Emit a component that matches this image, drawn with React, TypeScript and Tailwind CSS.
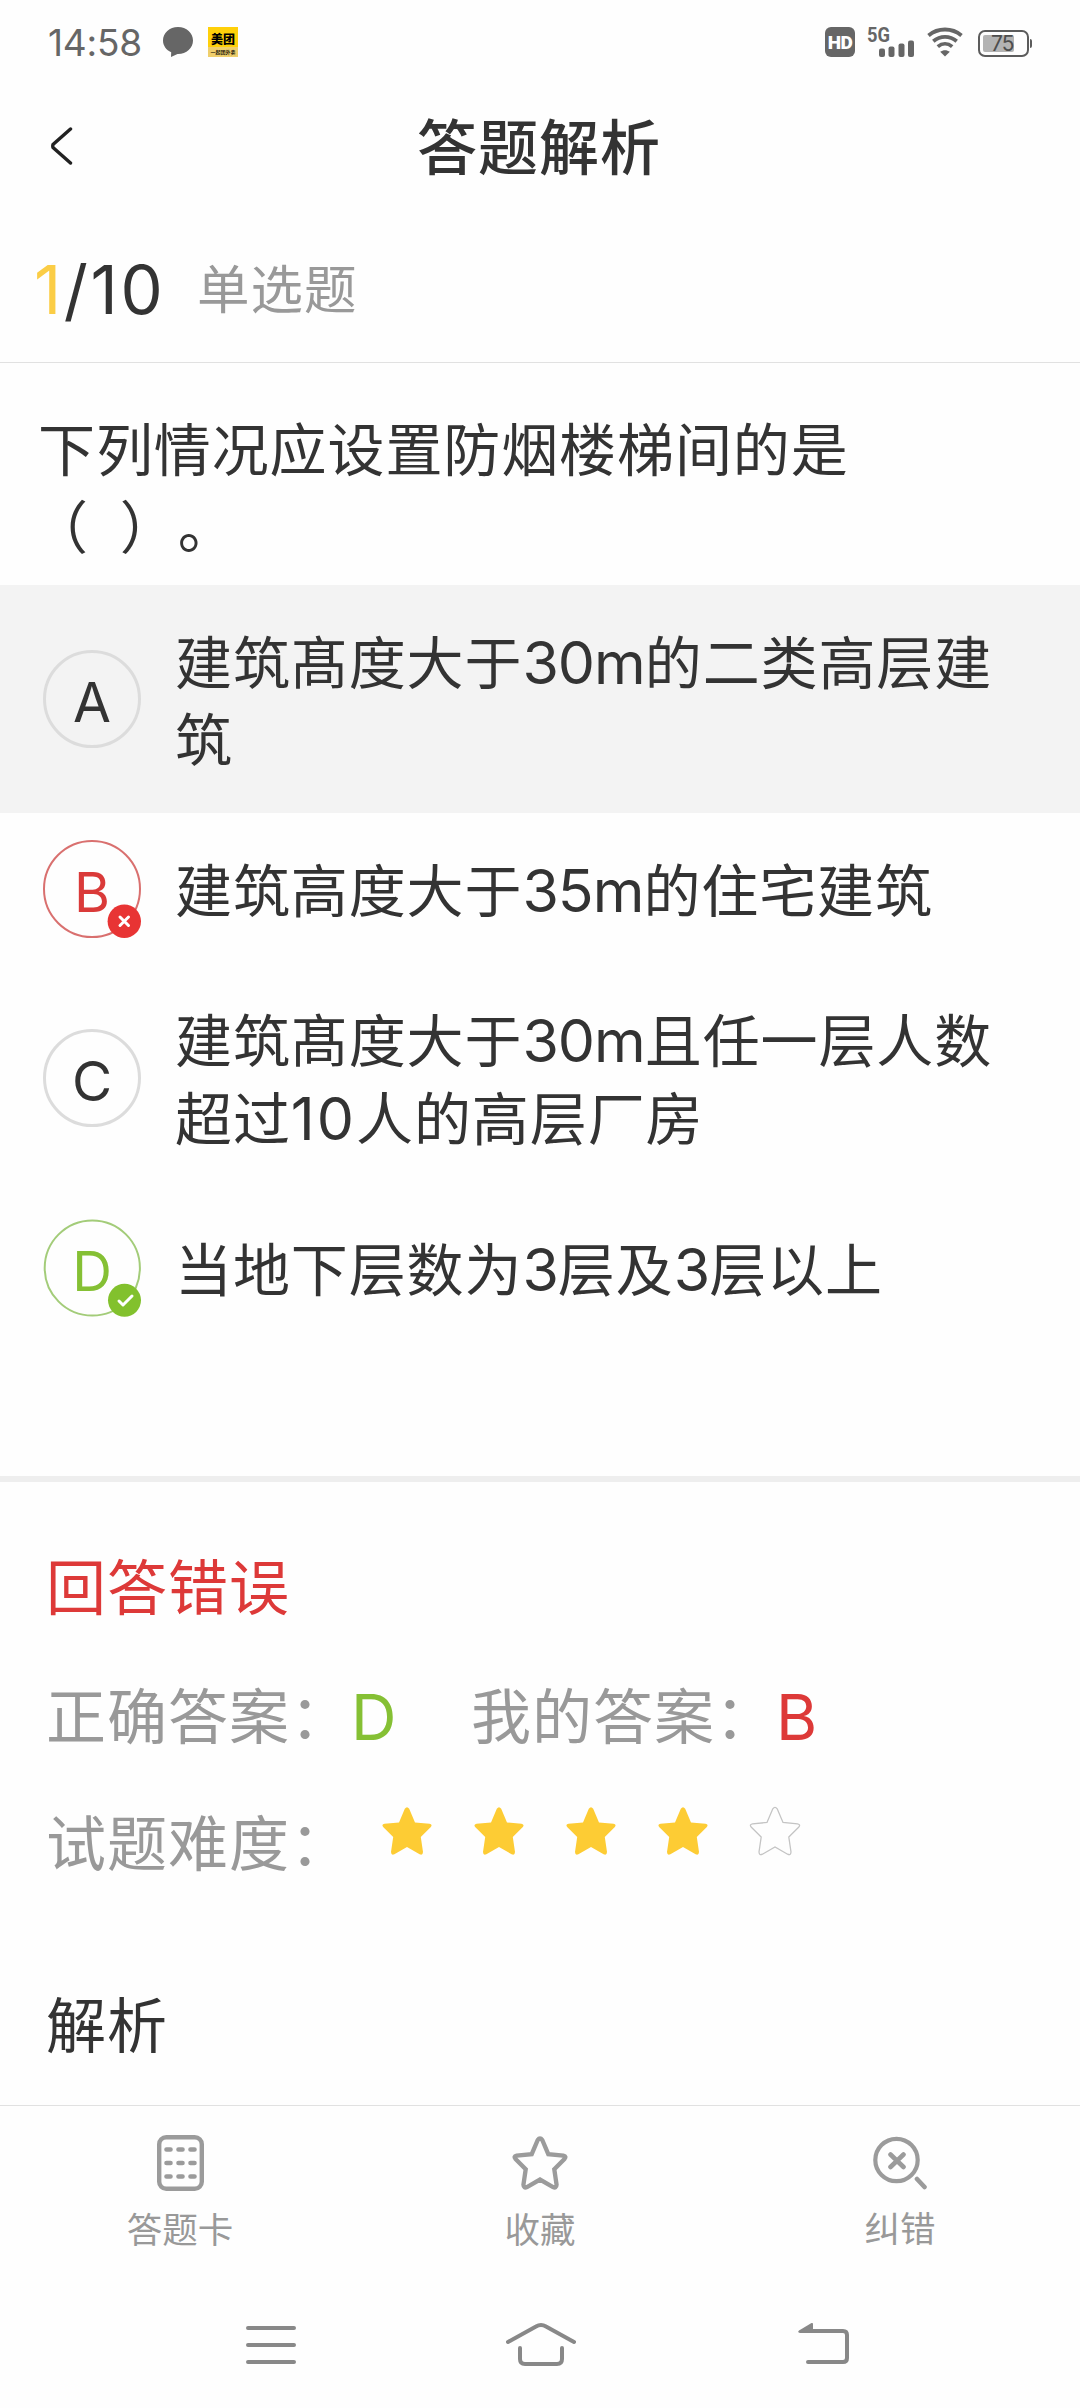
import React from "react";

const STAR_PATH =
  "M22.8 1.8Q25 -1.2 27.2 1.8L33 15.5L47.5 16.8Q51 17.6 48.6 20.2L38.8 30L41 45Q40.8 48.8 37.6 47.2L25 40L12.4 47.2Q9.2 48.8 9 45L11.2 30L1.4 20.2Q-1 17.6 2.5 16.8L17 15.5Z";

type Status = "normal" | "wrong" | "right";

const options: { key: string; text: string; status: Status; row: string }[] = [
  {
    key: "A",
    text: "建筑髙度大于30m的二类高层建筑",
    status: "normal",
    row: "h-[228px] bg-[#f3f3f3]",
  },
  {
    key: "B",
    text: "建筑高度大于35m的住宅建筑",
    status: "wrong",
    row: "h-[151px]",
  },
  {
    key: "C",
    text: "建筑髙度大于30m且任一层人数超过10人的高层厂房",
    status: "normal",
    row: "h-[228px]",
  },
  {
    key: "D",
    text: "当地下层数为3层及3层以上",
    status: "right",
    row: "h-[151px]",
  },
];

// digits and latin letters are set a little larger than the chinese text,
// numbers starting with the narrow "1" get some extra room
function MixedText({ text }: { text: string }) {
  return (
    <>
      {text.split(/([0-9A-Za-z]+)/).map((part, i) =>
        i % 2 ? (
          <span
            key={i}
            className={`text-[59px] ${
              part.startsWith("1") ? "tracking-[2px]" : "tracking-[-1px]"
            }`}
          >
            {part}
          </span>
        ) : (
          part
        )
      )}
    </>
  );
}

function StatusBar() {
  return (
    <div className="flex h-[84px] items-center pr-[48px] pl-[48px] text-[#666]">
      <span className="text-[37px] leading-none tracking-[-0.2px]">14:58</span>
      <svg className="ml-[21px]" width="30" height="30" viewBox="0 0 30 30">
        <path
          d="M15 0C6.500 0 0 6 0 13.500C0 18.600 3.200 23 8.200 25.300L8 30L14.500 27H15C23.500 27 30 21 30 13.500C30 6 23.500 0 15 0Z"
          fill="#666"
        />
      </svg>
      <div className="ml-[15px] flex h-[30px] w-[30px] flex-col items-center bg-[#ffd00a] text-black">
        <span className="mt-[6px] text-[12px] leading-[14px] font-black">
          美团
        </span>
        <div className="flex h-[10px] w-full items-center justify-center bg-[#efcf6c]">
          <span className="text-[5px] leading-none font-medium">
            一起团外卖
          </span>
        </div>
      </div>

      <div className="ml-auto flex h-[30px] w-[30px] items-center justify-center rounded-[6px] bg-[#666]">
        <span className="font-['Roboto',sans-serif] text-[19px] leading-none font-black tracking-[-0.5px] text-white">
          HD
        </span>
      </div>
      <svg
        className="ml-[12px] overflow-visible"
        width="48"
        height="30"
        viewBox="0 0 48 30"
      >
        <text
          x="0"
          y="14.500"
          fontSize="20"
          fontWeight="700"
          fontFamily="Roboto, sans-serif"
          textLength="23"
          lengthAdjust="spacingAndGlyphs"
          fill="#666"
        >
          5G
        </text>
        <rect x="12" y="21.500" width="6" height="8.500" rx="2" fill="#666" />
        <rect x="21.500" y="19.500" width="6" height="10.500" rx="2" fill="#666" />
        <rect x="31.500" y="16.500" width="6" height="13.500" rx="2" fill="#666" />
        <rect x="41" y="13.500" width="6" height="16.500" rx="2" fill="#666" />
      </svg>
      <svg
        className="ml-[12px]"
        width="36"
        height="30"
        viewBox="0 0 36 30"
        fill="none"
        stroke="#666"
        strokeWidth="3.800"
      >
        <path d="M1.500 8.500C11 0.500 25 0.500 34.500 8.500" />
        <path d="M6.300 14.200C13.200 8.400 22.800 8.400 29.700 14.200" />
        <path d="M10.800 19.600C15.200 16 20.800 16 25.200 19.600" />
        <path
          d="M13.200 24.800C16 22.600 20 22.600 22.800 24.800L18 29.500Z"
          fill="#666"
          stroke="none"
        />
      </svg>
      <div className="mt-[3px] ml-[15px] flex h-[27px] w-[51px] rounded-[7px] border-2 border-[#5c5c5c] p-[3px]">
        <div className="relative h-[17px] w-[31px] rounded-[2px] bg-[#b3b3b3]">
          <span className="absolute top-[-1px] left-[8px] text-[21px] leading-[20px] tracking-[-1px] text-[#4d4d4d]">
            75
          </span>
        </div>
      </div>
      <div className="mt-[3px] ml-[1px] h-[9px] w-[2px] rounded-r-sm bg-[#5c5c5c]"></div>
    </div>
  );
}

function OptionBadge({ label, status }: { label: string; status: Status }) {
  return (
    <div className="relative h-[98px] w-[98px] shrink-0">
      <svg width="98" height="98" viewBox="0 0 98 98" fill="none">
        {status === "normal" && (
          <circle cx="49" cy="49" r="47.500" stroke="#dcdcdc" strokeWidth="3" />
        )}
        {status === "wrong" && (
          <>
            <circle cx="49" cy="49" r="48" stroke="#d9706f" strokeWidth="2" />
            <circle cx="81.300" cy="81.300" r="16.700" fill="#e83434" />
            <path
              d="M77 77L85.500 85.500M85.500 77L77 85.500"
              stroke="#fff"
              strokeWidth="3"
              strokeLinecap="round"
            />
          </>
        )}
        {status === "right" && (
          <>
            <circle cx="49.300" cy="49" r="47.600" stroke="#a3cc79" strokeWidth="2" />
            <circle cx="81.500" cy="81.300" r="16.500" fill="#82c12d" />
            <path
              d="M76 82L80 86L89 77"
              stroke="#fff"
              strokeWidth="3"
              strokeLinecap="round"
              strokeLinejoin="round"
            />
          </>
        )}
      </svg>
      <span
        className={`absolute inset-x-0 top-[24px] text-center text-[55px] leading-[56px] ${
          status === "wrong"
            ? "text-[#da3a39]"
            : status === "right"
              ? "text-[#85c034]"
              : "text-[#333]"
        }`}
      >
        {label}
      </span>
    </div>
  );
}

function Stars({ value }: { value: number }) {
  return (
    <div className="flex gap-[40px]">
      {[1, 2, 3, 4, 5].map((n) => (
        <svg
          key={n}
          className="overflow-visible"
          width="52"
          height="48"
          viewBox="-1 0 52 48"
        >
          <path
            d={STAR_PATH}
            fill={n <= value ? "#fdcc34" : "none"}
            stroke={n <= value ? "none" : "#c4c4c4"}
            strokeWidth="1.300"
          />
        </svg>
      ))}
    </div>
  );
}

function TabBar() {
  return (
    <div className="flex h-[168px] border-t border-[#e1e1e1] text-[35.500px] leading-[40px] text-[#999]">
      <div className="flex flex-1 flex-col items-center pt-[29px]">
        <svg width="47" height="56" viewBox="0 0 47 56" fill="none" stroke="#9b9b9b">
          <rect x="2.200" y="2.200" width="42.600" height="51.600" rx="7" strokeWidth="4.400" />
          <path
            d="M9.500 14.500h4M21.500 14.500h4M33.500 14.500h4M9.500 28h4M21.500 28h4M33.500 28h4M9.500 41.500h4M21.500 41.500h4M33.500 41.500h4"
            strokeWidth="4.600"
            strokeLinecap="round"
          />
        </svg>
        <span className="mt-[20px]">答题卡</span>
      </div>
      <div className="flex flex-1 flex-col items-center pt-[29px]">
        <svg width="58" height="56" viewBox="-3 -3 56 54" fill="none" stroke="#9b9b9b">
          <path d={STAR_PATH} strokeWidth="4.200" />
        </svg>
        <span className="mt-[20px]">收藏</span>
      </div>
      <div className="flex flex-1 flex-col items-center pt-[29px]">
        <svg width="54" height="56" viewBox="0 0 54 56" fill="none" stroke="#9b9b9b">
          <circle cx="23.500" cy="25" r="21.200" strokeWidth="4.200" />
          <path
            d="M17.500 19.500L30.500 32M30.500 19.500L17.500 32M44 44L51.500 52"
            strokeWidth="4.600"
            strokeLinecap="round"
          />
        </svg>
        <span className="mt-[19px]">纠错</span>
      </div>
    </div>
  );
}

function SystemNav() {
  return (
    <div className="flex h-[135px] items-start pt-[49px] pl-[246px]">
      <svg width="50" height="46" viewBox="0 0 50 46" fill="none" stroke="#888">
        <path d="M2 6H48M2 23H48M2 40H48" strokeWidth="4" strokeLinecap="round" />
      </svg>
      <svg
        className="ml-[210px]"
        width="70"
        height="46"
        viewBox="0 0 70 46"
        fill="none"
        stroke="#888"
        strokeWidth="4"
        strokeLinecap="round"
      >
        <path d="M2 20L30 4.500Q35 1.500 40 4.500L68 20" />
        <path d="M14 26V37Q14 42 19 42H51Q56 42 56 37V26" />
      </svg>
      <svg className="ml-[222px]" width="52" height="46" viewBox="0 0 52 46" fill="none">
        <path
          d="M6 9H45Q49 9 49 13V36Q49 40 45 40H10"
          stroke="#888"
          strokeWidth="4"
          strokeLinecap="round"
        />
        <path d="M1 8.500L13.500 1Q15 0.500 15 2V11H2Q-1 10.500 1 8.500Z" fill="#888" />
      </svg>
    </div>
  );
}

function App() {
  return (
    <div className="flex h-[2408px] w-[1080px] flex-col overflow-hidden bg-[#fefefe] font-['Inter','Noto_Sans_CJK_SC',sans-serif] text-[#333]">
      <StatusBar />

      <div className="flex h-[126px] items-center pl-[51px]">
        <svg className="mb-[3px]" width="22" height="38" viewBox="0 0 22 38" fill="none">
          <path
            d="M19.500 2L2 17.500Q1.500 19 2 20.500L19.500 36"
            stroke="#222"
            strokeWidth="3.400"
            strokeLinecap="round"
          />
        </svg>
        <h1 className="flex-1 pt-[2px] pr-[75px] text-center text-[60px] leading-[80px] font-medium tracking-[1px]">
          答题解析
        </h1>
      </div>

      <div className="flex h-[153px] items-center border-b border-[#e1e1e1] pt-[8px] pl-[34px]">
        <div className="w-[130px] text-[67px] leading-[80px] tracking-[2.600px] whitespace-nowrap">
          <span className="text-[#fbcd46]">1</span>/10
        </div>
        <span className="ml-[33px] text-[52.500px] leading-[80px] tracking-[1px] text-[#999]">
          单选题
        </span>
      </div>

      <p className="h-[222px] pt-[49px] pl-[38px] text-[57px] leading-[77px] tracking-[0.9px] [text-spacing-trim:space-all]">
        下列情况应设置防烟楼梯间的是
        <br />
        <span className="-ml-[7px] [word-spacing:14px]">（ ）。</span>
      </p>

      {options.map((option) => (
        <div
          key={option.key}
          className={`flex items-center pr-[60px] pl-[43px] ${option.row}`}
        >
          <OptionBadge label={option.key} status={option.status} />
          <p className="ml-[34px] w-[840px] pt-[4px] text-[57px] leading-[77px] tracking-[0.9px]">
            <MixedText text={option.text} />
          </p>
        </div>
      ))}

      <div className="mt-[133px] h-[6px] bg-[#eee]"></div>

      <div className="flex-1 pl-[46px] text-[60px] leading-[80px] tracking-[1px] text-[#999]">
        <p className="mt-[66px] text-[#dd3938]">回答错误</p>
        <div className="mt-[49px] flex h-[80px]">
          <span>正确答案：</span>
          <span className="w-[120px] text-[63px] text-[#85c034]">D</span>
          <span>我的答案：</span>
          <span className="text-[63px] text-[#dd3938]">B</span>
        </div>
        <div className="mt-[47px] flex h-[80px]">
          <span className="w-[335px]">试题难度：</span>
          <div className="pt-[3px]">
            <Stars value={4} />
          </div>
        </div>
        <p className="mt-[102px] text-[#333]">解析</p>
      </div>

      <TabBar />
      <SystemNav />
    </div>
  );
}

export default App;
